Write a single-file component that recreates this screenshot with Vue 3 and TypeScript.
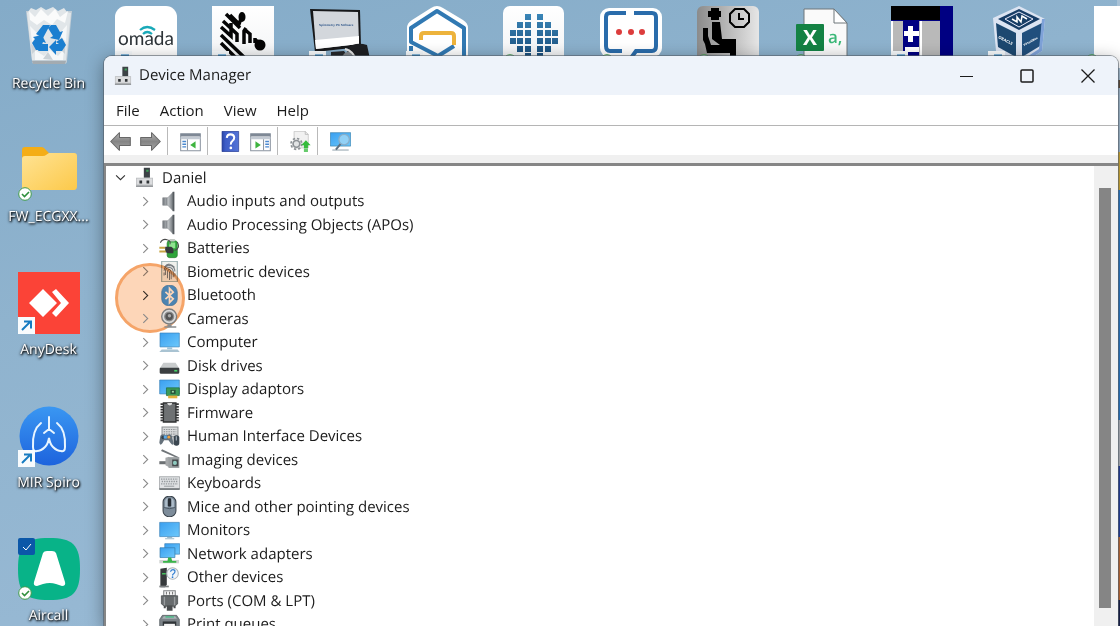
<script setup lang="ts">
import { ref } from 'vue'

type Badge = 'link' | 'sync' | ''

interface Shortcut {
  id: string
  name: string
  badge: Badge
  checked?: boolean
}

interface DeviceClass {
  icon: string
  name: string
}

const topShortcuts: Shortcut[] = [
  { id: 'bin', name: 'Recycle Bin', badge: '' },
  { id: 'omada', name: '', badge: 'link' },
  { id: 'zebra', name: '', badge: 'link' },
  { id: 'spiropc', name: '', badge: 'link' },
  { id: 'hexagon', name: '', badge: 'link' },
  { id: 'squares', name: '', badge: 'sync' },
  { id: 'chat', name: '', badge: 'sync' },
  { id: 'waiting', name: '', badge: 'sync' },
  { id: 'csv', name: '', badge: 'sync' },
  { id: 'cross', name: '', badge: 'link' },
  { id: 'vbox', name: '', badge: 'link' },
  { id: 'blank', name: '', badge: 'sync' },
]

const sideShortcuts: Shortcut[] = [
  { id: 'folder', name: 'FW_ECGXX...', badge: 'sync' },
  { id: 'anydesk', name: 'AnyDesk', badge: 'link' },
  { id: 'spiro', name: 'MIR Spiro', badge: 'link' },
  { id: 'aircall', name: 'Aircall', badge: 'sync', checked: true },
]

const menus: string[] = ['File', 'Action', 'View', 'Help']

const toolGroups: { id: string; label: string }[][] = [
  [{ id: 't-back', label: 'Back' }, { id: 't-forward', label: 'Forward' }],
  [{ id: 't-tree', label: 'Show/Hide Console Tree' }],
  [{ id: 't-help', label: 'Help' }, { id: 't-action', label: 'Show/Hide Action Pane' }],
  [{ id: 't-update', label: 'Update device drivers' }],
  [{ id: 't-scan', label: 'Scan for hardware changes' }],
]

const devices: DeviceClass[] = [
  { icon: 'd-audio', name: 'Audio inputs and outputs' },
  { icon: 'd-audio', name: 'Audio Processing Objects (APOs)' },
  { icon: 'd-battery', name: 'Batteries' },
  { icon: 'd-finger', name: 'Biometric devices' },
  { icon: 'd-bluetooth', name: 'Bluetooth' },
  { icon: 'd-camera', name: 'Cameras' },
  { icon: 'd-computer', name: 'Computer' },
  { icon: 'd-disk', name: 'Disk drives' },
  { icon: 'd-display', name: 'Display adaptors' },
  { icon: 'd-firmware', name: 'Firmware' },
  { icon: 'd-hid', name: 'Human Interface Devices' },
  { icon: 'd-imaging', name: 'Imaging devices' },
  { icon: 'd-keyboard', name: 'Keyboards' },
  { icon: 'd-mouse', name: 'Mice and other pointing devices' },
  { icon: 'd-monitor', name: 'Monitors' },
  { icon: 'd-network', name: 'Network adapters' },
  { icon: 'd-other', name: 'Other devices' },
  { icon: 'd-port', name: 'Ports (COM & LPT)' },
  { icon: 'd-printer', name: 'Print queues' },
]

const highlighted = ref('Bluetooth')
const expanded = ref(true)
</script>

<template>
  <div class="desktop">
    <svg class="sprite" aria-hidden="true">
      <defs>
        <linearGradient id="gSky" x1="0" y1="0" x2="1" y2="1">
          <stop offset="0" stop-color="#3a9ff0" /><stop offset="1" stop-color="#6cc8fb" />
        </linearGradient>
        <linearGradient id="gSteel" x1="0" y1="0" x2="1" y2="0">
          <stop offset="0" stop-color="#6d7277" /><stop offset="0.5" stop-color="#c3c7ca" /><stop offset="1" stop-color="#6d7277" />
        </linearGradient>
        <linearGradient id="gArrow" x1="0" y1="0" x2="0" y2="1">
          <stop offset="0" stop-color="#b4b4b4" /><stop offset="0.5" stop-color="#858585" /><stop offset="1" stop-color="#a6a6a6" />
        </linearGradient>
        <linearGradient id="gFolder" x1="0" y1="0" x2="1" y2="1">
          <stop offset="0" stop-color="#ffe394" /><stop offset="1" stop-color="#fcc94a" />
        </linearGradient>
        <linearGradient id="gSpiro" x1="0" y1="0" x2="0" y2="1">
          <stop offset="0" stop-color="#3a97f2" /><stop offset="1" stop-color="#1d63dd" />
        </linearGradient>
        <linearGradient id="gTile" x1="0" y1="0" x2="0" y2="1">
          <stop offset="0" stop-color="#ffffff" /><stop offset="1" stop-color="#f0f2f4" />
        </linearGradient>
        <linearGradient id="gSeat" x1="0" y1="0" x2="1" y2="0">
          <stop offset="0" stop-color="#8b8b8b" /><stop offset="1" stop-color="#e6e6e6" />
        </linearGradient>
        <linearGradient id="gHelp" x1="0" y1="0" x2="1" y2="0">
          <stop offset="0" stop-color="#2a45a8" /><stop offset="0.2" stop-color="#3d5cc6" /><stop offset="1" stop-color="#5474d6" />
        </linearGradient>
        <linearGradient id="gSquares" x1="0" y1="0" x2="0" y2="1">
          <stop offset="0" stop-color="#3a86b8" /><stop offset="1" stop-color="#174a78" />
        </linearGradient>
      </defs>

      <!-- desktop shortcuts -->
      <symbol id="bin" viewBox="0 0 62 62">
        <path d="M8 5h46l-5 50q0 3-3 3H17q-3 0-3-3z" fill="#c3ced6" />
        <path d="M9 7l4-5 5 2 5-3 5 3 7-3 5 4 6-3 3 4 4 1-5 47H14z" fill="#e1e6e9" />
        <path d="M11 5l6 6 6-8 7 7 7-7 5 8 8-6-3 12-8-4-5 6-8-5-7 5-7-5z" fill="#fafbfb" />
        <path d="M12 20l8 8-6 8zM49 19l-8 9 7 8zM17 44l9 6 6-6 8 6 6-7-1 11H17z" fill="#f6f8f9" />
        <path d="M13 38l6 5-5 5zM30 46l5 8-10-1zM47 38l-5 5 5 5z" fill="#cbd2d7" />
        <path d="M14 55h34l-1 3H15z" fill="#a3abb1" />
        <g fill="#1b7fd0">
          <path d="M25 19h7l-7 13-7-4zM33 19h5l4 7 3-1-4 9-9-2 3-2-5-8z" />
          <path d="M15 31l9-2 4 8-3-1-3 8h-4l-4-7 3-4z" />
          <path d="M20 45l4-7h6v7z" />
          <path d="M38 36l6-4 4 7-4 6h-6v4l-7-8 7-7v4h3z" />
        </g>
      </symbol>
      <symbol id="omada" viewBox="0 0 62 62">
        <rect width="62" height="62" rx="11" fill="#fff" />
        <path d="M25 24q7-6 15 0M28 28q4-4 9 0" fill="none" stroke="#19a9b8" stroke-width="2.200" />
        <text x="31" y="39" text-anchor="middle" font-family="Lato, sans-serif" font-size="19" fill="#2d3338">omada</text>
      </symbol>
      <symbol id="zebra" viewBox="0 0 62 62">
        <rect width="62" height="62" fill="url(#gTile)" />
        <g fill="none" stroke="#050505" stroke-width="3.500">
          <path d="M9 29l26 25M9 21l10 9V17M11 15l14 13v8M14 8l14 14M9 37l20 20M18 9l9 9 3-8M32 38V25l2-3M32 23l6 5v9M43 32v5" />
        </g>
        <ellipse cx="30" cy="11" rx="3.500" ry="5" fill="#050505" /><circle cx="48" cy="39" r="5.500" fill="#050505" /><path d="M42 32l8 3-4 4z" fill="#050505" />
      </symbol>
      <symbol id="spiropc" viewBox="0 0 62 62">
        <path d="M1 3l50 1 1 37-46 5z" fill="#17181a" />
        <path d="M4 5l45 1 1 32-43 5z" fill="#d3d7dc" />
        <path d="M6 34l44-4v8L7 43z" fill="#fff" />
        <path d="M22 46l13-1 5 7H22z" fill="#26282b" />
        <text x="10" y="20" font-family="Liberation Sans, sans-serif" font-size="3" font-weight="bold" fill="#2c5488">Spirometry PC Software</text>
        <path d="M38 43q8-8 20-4l3 14-20 9z" fill="#1e1f22" />
        <path d="M32 53q4-10 12-6l6 10H32z" fill="#85898d" /><path d="M36 43q9 2 11 12" fill="none" stroke="#e4e4e4" stroke-width="2" />
      </symbol>
      <symbol id="hexagon" viewBox="0 0 62 62">
        <path d="M31 0q3 0 6 2l20 12q5 3 5 8v40H8L1 48V22q0-5 5-8L25 2q3-2 6-2z" fill="#fff" />
        <path d="M58 62V22L31 5 5 22v14l27 14 16-10" fill="none" stroke="#3179b3" stroke-width="4" stroke-linejoin="round" />
        <path d="M15 34v-4q0-3 3-3h27q3 0 3 3v9" fill="none" stroke="#edb33c" stroke-width="4" />
        <path d="M5 40v5" stroke="#3179b3" stroke-width="4" />
      </symbol>
      <symbol id="squares" viewBox="0 0 62 62">
        <rect width="61" height="62" rx="7" fill="url(#gTile)" />
        <path d="M22 8h6v6h-6zM34 8h6v6h-6zM14 16h6v6h-6zM22 16h6v6h-6zM34 16h6v6h-6zM42 16h6v6h-6zM7 24h6v6H7zM14 24h6v6h-6zM22 24h6v6h-6zM34 24h6v6h-6zM42 24h6v6h-6zM49 24h6v6h-6zM7 32h6v6H7zM14 32h6v6h-6zM22 32h6v6h-6zM34 32h6v6h-6zM42 32h6v6h-6zM49 32h6v6h-6zM14 40h6v6h-6zM22 40h6v6h-6zM34 40h6v6h-6zM42 40h6v6h-6zM22 47h6v6h-6zM34 47h6v6h-6z" fill="url(#gSquares)" />
      </symbol>
      <symbol id="chat" viewBox="0 0 62 62">
        <rect y="2" width="62" height="49" rx="9" fill="#fff" />
        <path d="M26 7H10q-4 0-4 4v29q0 5 4 5h12M34 7h18q4 0 4 4v29q0 5-4 5H36l-5 7" fill="none" stroke="#2a6cab" stroke-width="4" />
        <g fill="#dc3d3d"><circle cx="19" cy="26" r="3" /><circle cx="31" cy="26" r="3" /><circle cx="42" cy="26" r="3" /></g>
      </symbol>
      <symbol id="waiting" viewBox="0 0 62 62">
        <rect width="62" height="62" rx="6" fill="url(#gSeat)" />
        <path d="M14 2h8v3h2v6h-2v3h-8v-3h-3V5h3zM15 16h8l2 17h14v25h-6V47H10l-2-9-2-4V22h5v8l3 9h9l-8-6z" />
        <path d="M38 3h9l5 5v8l-5 5h-9l-5-5V8zM42 7v6h5" fill="none" stroke="#000" stroke-width="2" />
      </symbol>
      <symbol id="csv" viewBox="0 0 62 62">
        <path d="M10 3h30l13 14v45H10z" fill="#fafafa" stroke="#6f777b" />
        <path d="M40 3v14h13z" fill="#fff" stroke="#6f777b" />
        <rect x="2" y="18" width="28" height="27" rx="1" fill="#148244" />
        <text x="16" y="39" text-anchor="middle" font-family="Open Sans, sans-serif" font-size="21" font-weight="bold" fill="#fff">X</text>
        <text x="34" y="37" font-family="Open Sans, sans-serif" font-size="17" font-weight="600" fill="#3cb878">a,</text>
      </symbol>
      <symbol id="cross" viewBox="0 0 62 62">
        <path d="M0 0h62v62H0z" fill="#000082" /><path d="M0 0h49v14H0z" />
        <path d="M0 15h49v47H0z" fill="#b9b9b9" /><path d="M0 15h2v47H0zM29 15h2v47h-2z" fill="#fff" />
        <path d="M12 14h16v48H12z" fill="#000082" />
        <path d="M17 20h5v5h6v5h-6v6h-5v-6h-4v-5h4zM14 41h14v5H14z" fill="#fff" />
      </symbol>
      <symbol id="vbox" viewBox="0 0 62 62">
        <path d="M31 0l26 13-3 32-23 15L8 45 5 12z" fill="#dce4f2" />
        <path d="M31 3l21 10-21 11L10 13z" fill="#173d66" /><path d="M31 6l14 7-14 8-14-8z" fill="none" stroke="#eef" />
        <path d="M24 13l5 3 0-5 4 5 1-6 5 3" fill="none" stroke="#fff" stroke-width="1.500" />
        <path d="M8 17l20 10v24L10 41z" fill="#1d4870" /><path d="M34 27l20-10-2 23-18 11z" fill="#214f7d" />
        <path d="M57 13l-3 32-23 15v-4l20-13 3-30z" fill="#7ea2d8" />
        <text font-family="Open Sans, sans-serif" font-size="4" font-weight="bold" fill="#fff" transform="translate(10 32) rotate(27)">ORACLE</text>
        <text font-family="Open Sans, sans-serif" font-size="3" font-weight="bold" fill="#fff" transform="translate(36 40) rotate(-28)">VirtualBox</text>
      </symbol>
      <symbol id="blank" viewBox="0 0 62 62"><path d="M9 0h46v62H9z" fill="#fff" /></symbol>
      <symbol id="folder" viewBox="0 0 62 62">
        <path d="M4 11q0-3 3-3h16q2 0 3 1l5 5h24q3 0 3 3v20H4z" fill="#f4ad16" />
        <path d="M4 20q0-3 3-3h18q2 0 3-1l3-2h25q3 0 3 3v30q0 4-3 4H7q-3 0-3-3z" fill="url(#gFolder)" />
      </symbol>
      <symbol id="anydesk" viewBox="0 0 62 62">
        <path d="M0 0h62v62H0z" fill="#fb4337" />
        <path d="M25 17l14 14-14 14-14-14zM34 20l4-3 13 14-13 14-4-4 9-10z" fill="#fff" />
      </symbol>
      <symbol id="spiro" viewBox="0 0 62 62">
        <circle cx="31" cy="31" r="29.500" fill="url(#gSpiro)" />
        <path d="M31 12v12l-5 4M31 24l5 4M23 18q-9 7-8 24 0 5 4 4 4 0 8-4 3-3 4-9 1 6 4 9 4 4 8 4 4 1 4-4 1-17-8-24" fill="none" stroke="#e8f5ff" stroke-width="2" stroke-linecap="round" />
      </symbol>
      <symbol id="aircall" viewBox="0 0 62 62">
        <path d="M31 0C55 0 62 7 62 31S55 62 31 62 0 55 0 31 7 0 31 0z" fill="#08b388" />
        <path d="M25 15q1-2 4-2h5q3 0 4 2l9 29q1 4-3 4l-6-2q-6-2-13 0l-6 2q-4 0-3-4z" fill="#fff" />
      </symbol>
      <symbol id="link" viewBox="0 0 62 62">
        <path d="M0 45h17v17H0z" fill="#f8fbfd" />
        <path d="M4 58l8-8M6 49.500h7v7" fill="none" stroke="#167bc1" stroke-width="2" />
      </symbol>
      <symbol id="sync" viewBox="0 0 62 62">
        <circle cx="7" cy="55" r="6.300" fill="#fff" stroke="#3f9b4b" />
        <path d="M4 55l2.500 2.500 4.500-4.500" fill="none" stroke="#2f8f3c" stroke-width="1.600" />
      </symbol>
      <symbol id="ticked" viewBox="0 0 62 62">
        <rect width="17" height="17" rx="2" fill="#0b57a8" />
        <path d="M5 9l3 3 5-6" fill="none" stroke="#fff" />
      </symbol>

      <!-- window and toolbar -->
      <symbol id="manager" viewBox="0 0 54 62">
        <path d="M25 2h18v30H25z" fill="#3c4246" /><path d="M32 8h7v6h-7z" fill="#3fa05a" />
        <path d="M2 32h50v26H2z" fill="#b9bbbd" /><path d="M4 34h46v18H4z" fill="#dcdddf" />
        <path d="M12 40h8v9h-8zM33 40h8v9h-8z" fill="#2f3336" /><path d="M2 55h50v3H2z" fill="#85898c" />
      </symbol>
      <symbol id="t-back" viewBox="0 0 62 62">
        <path d="M2 31L28 5v14h32v24H28v14z" fill="url(#gArrow)" stroke="#686868" stroke-width="3" stroke-linejoin="round" />
      </symbol>
      <symbol id="t-forward" viewBox="0 0 62 62">
        <path d="M60 31L34 5v14H2v24h32v14z" fill="url(#gArrow)" stroke="#686868" stroke-width="3" stroke-linejoin="round" />
      </symbol>
      <symbol id="t-tree" viewBox="0 0 62 62">
        <path d="M2 8h58v50H2z" fill="#fff" stroke="#8b94a0" stroke-width="3" />
        <path d="M2 8h58v8H2z" fill="#7e8895" /><path d="M2 18h58v6H2z" fill="#c3cad3" /><path d="M22 24v33" stroke="#8b94a0" stroke-width="3" />
        <path d="M7 31h11M7 39h11M7 47h11" stroke="#4a88cf" stroke-width="4" /><path d="M46 30v22L30 41z" fill="#3fb43f" />
      </symbol>
      <symbol id="t-help" viewBox="0 0 62 62">
        <path d="M6 1h49v60H6z" fill="url(#gHelp)" stroke="#24398f" stroke-width="2" />
        <path d="M20 20q1-10 11-10t11 9q0 6-5 10-6 4-5 11" fill="none" stroke="#fff" stroke-width="6" /><circle cx="32" cy="50" r="4" fill="#fff" />
      </symbol>
      <symbol id="t-action" viewBox="0 0 62 62">
        <path d="M2 8h58v50H2z" fill="#fff" stroke="#8b94a0" stroke-width="3" />
        <path d="M2 8h58v8H2z" fill="#7e8895" /><path d="M2 18h58v6H2z" fill="#c3cad3" /><path d="M40 24v33" stroke="#8b94a0" stroke-width="3" />
        <path d="M45 31h11M45 39h11M45 47h11" stroke="#4a88cf" stroke-width="4" /><path d="M16 30v22l16-11z" fill="#3fb43f" />
      </symbol>
      <symbol id="t-update" viewBox="0 0 62 62">
        <path d="M12 1h33l9 9v40H12z" fill="#f1f1f1" stroke="#bcbcbc" stroke-width="2" /><path d="M45 1v9h9" fill="none" stroke="#aaa" stroke-width="2" />
        <circle cx="19" cy="38" r="16" fill="none" stroke="#8d9296" stroke-width="5" stroke-dasharray="7 5.500" />
        <circle cx="19" cy="38" r="10" fill="#e2e4e5" stroke="#8d9296" stroke-width="5" />
        <path d="M47 27l14 15h-8v8H41v-8h-8zM41 52h12v3H41zM41 57h12v4H41z" fill="#35bb3c" />
      </symbol>
      <symbol id="t-scan" viewBox="0 0 64 62">
        <path d="M1 4h62v41H1z" fill="url(#gSky)" stroke="#357da8" stroke-width="2" />
        <path d="M7 57h50" stroke="#8fa0ab" stroke-width="3" />
        <path d="M34 36L18 56" stroke="#5d7080" stroke-width="6" /><circle cx="43" cy="25" r="16" fill="#9bd5f6" fill-opacity=".85" stroke="#86aeca" stroke-width="4" />
      </symbol>

      <!-- device classes -->
      <symbol id="d-audio" viewBox="0 0 62 62">
        <path d="M11 20h15L42 3v56L26 42H11z" fill="url(#gSteel)" stroke="#8b8f93" stroke-width="2" /><path d="M23 21v20" stroke="#6c7176" stroke-width="2" /><path d="M43 2v58" stroke="#565b60" stroke-width="5" />
      </symbol>
      <symbol id="d-battery" viewBox="0 0 62 62">
        <rect x="24" y="8" width="30" height="50" rx="7" fill="#2fa53b" stroke="#277a2e" stroke-width="2" /><path d="M30 13h18v17H30z" fill="#8fe38f" />
        <rect x="30" y="3" width="18" height="7" rx="3" fill="#c3c8c3" />
        <path d="M4 14Q10 1 24 5q12 2 8 14M54 12q10 18-8 25" fill="none" stroke="#4b4b4b" stroke-width="3" />
        <path d="M18 26h18q10 5 6 19H27l-9-4z" fill="#363a3c" /><path d="M1 29h17M1 40h19" stroke="#c6a544" stroke-width="6" />
      </symbol>
      <symbol id="d-finger" viewBox="0 0 62 62">
        <path d="M8 1h46v60H8z" fill="#f0f1ed" stroke="#8fa6a8" stroke-width="3" />
        <path d="M16 18q14-18 30 1M15 29q1-15 15-16 16 0 17 18M19 41V30q1-11 11-11t12 12v17M25 51V31q1-6 5-6t6 7v22M31 31v25M47 36v10M15 34v9" fill="none" stroke="#767b80" stroke-width="3" />
      </symbol>
      <symbol id="d-bluetooth" viewBox="0 0 62 62">
        <rect x="8" y="1" width="46" height="60" rx="20" fill="#4c9df5" stroke="#4686c9" stroke-width="2" />
        <path d="M19 20l23 21-11 11V10l11 11-23 21" fill="none" stroke="#fff" stroke-width="5" />
      </symbol>
      <symbol id="d-camera" viewBox="0 0 62 62">
        <circle cx="30" cy="25" r="22" fill="#d9d9d9" stroke="#7d7d7d" stroke-width="4" /><circle cx="30" cy="25" r="13" fill="#555" stroke="#8c8c8c" stroke-width="4" /><circle cx="31" cy="23" r="5" fill="#aaa" />
        <path d="M25 48h12v6h14v4H16v-4h9z" fill="#8a8d8f" />
      </symbol>
      <symbol id="d-computer" viewBox="0 0 62 62">
        <path d="M3 3h57v41H3z" fill="url(#gSky)" stroke="#3b83b8" stroke-width="2" /><path d="M24 45h15v6H24z" fill="#9cc3da" /><path d="M8 52h47l6 7H1z" fill="#a9c3d2" />
      </symbol>
      <symbol id="d-disk" viewBox="0 0 62 62">
        <path d="M13 23h36l11 17H2z" fill="#c9cccd" /><rect x="2" y="38" width="58" height="17" rx="3" fill="#3b3f41" /><path d="M45 44h9v5h-9z" fill="#45d067" />
      </symbol>
      <symbol id="d-display" viewBox="0 0 62 62">
        <path d="M2 3h58v41H2z" fill="url(#gSky)" stroke="#3b83b8" stroke-width="2" /><path d="M22 26h38v23H22z" fill="#3a9a58" stroke="#1a6636" stroke-width="2" />
        <path d="M27 49h27v8H27z" fill="#e3b23c" /><path d="M34 32h15v12H34z" fill="#275139" /><path d="M38 35h6v5h-6z" fill="#9dd5a6" />
      </symbol>
      <symbol id="d-firmware" viewBox="0 0 62 62">
        <path d="M13 3h37v56H13z" fill="#6e7173" stroke="#2f3132" stroke-width="4" />
        <path d="M9 4v56M54 4v56" stroke="#38393a" stroke-width="9" stroke-dasharray="5 3" /><path d="M24 3h15q0 7-7 7t-8-7z" fill="#ddd" />
      </symbol>
      <symbol id="d-hid" viewBox="0 0 62 62">
        <path d="M9 3h47v29H9z" fill="#d8dadb" stroke="#8b8f92" stroke-width="3" /><path d="M14 10h37M14 17h37M14 24h37" stroke="#8b8f92" stroke-width="3" stroke-dasharray="4 3" />
        <path d="M4 29q5-8 13-3 6 2 12-1 7-3 10 7l4 21q-3 6-9-3l-6-8H15l-5 9q-7 9-9-2z" fill="#65717b" /><circle cx="12" cy="34" r="5" fill="#36414a" /><path d="M14 28h9v9h-9z" fill="#58a9e8" /><circle cx="29" cy="33" r="4" fill="#f1a13c" />
        <rect x="43" y="27" width="17" height="31" rx="8" fill="#3b4751" /><path d="M51 30v13" stroke="#b4c1cb" stroke-width="3" />
      </symbol>
      <symbol id="d-imaging" viewBox="0 0 62 62">
        <path d="M9 1l50 23-2 4L6 6z" fill="#707579" /><path d="M1 36h20v9H1z" fill="#6c7073" /><path d="M19 26l11-3v31l-11-6z" fill="#a6a9ab" /><path d="M28 24h32v32H28z" fill="#9ba0a2" /><path d="M39 31h18v20H39z" fill="#44494c" /><circle cx="47" cy="41" r="6" fill="#8ecabf" />
      </symbol>
      <symbol id="d-keyboard" viewBox="0 0 62 62">
        <path d="M1 11h60v36H1z" fill="#dfe1e3" stroke="#8a8e92" stroke-width="2" /><path d="M6 18h50M8 25h48M6 32h50" stroke="#92979b" stroke-width="4" stroke-dasharray="4 3" /><path d="M15 39h30" stroke="#9a9ea2" stroke-width="3" /><path d="M1 45h60v5H1z" fill="#73787c" />
      </symbol>
      <symbol id="d-mouse" viewBox="0 0 62 62">
        <rect x="12" y="1" width="38" height="60" rx="17" fill="#7d8c9a" stroke="#374049" stroke-width="3" /><path d="M18 19q0-12 8-12v26h-8zM36 7q8 1 8 13v13h-8z" fill="#aebdca" /><rect x="26" y="7" width="10" height="24" rx="4" fill="#292f36" /><path d="M15 34q16 7 32 0" fill="none" stroke="#36404a" stroke-width="2" />
      </symbol>
      <symbol id="d-monitor" viewBox="0 0 62 62">
        <path d="M2 7h58v42H2z" fill="url(#gSky)" stroke="#3b83b8" stroke-width="2" /><path d="M24 50h15v3H24zM18 54h27v3H18z" fill="#9cb9c9" />
      </symbol>
      <symbol id="d-network" viewBox="0 0 62 62">
        <path d="M17 2h44v31H17z" fill="url(#gSky)" stroke="#3b83b8" stroke-width="2" /><path d="M3 14h44v29H3z" fill="url(#gSky)" stroke="#3479aa" stroke-width="2" />
        <path d="M1 50h58v10H1z" fill="#d0d3d2" /><path d="M27 43h9l3 10h12v5H12v-5h13z" fill="#39b54a" />
      </symbol>
      <symbol id="d-other" viewBox="0 0 62 62">
        <path d="M4 5l19-3v50l-5 8H4z" fill="#363a3c" /><path d="M9 18h11v4H9z" fill="#4ad164" /><path d="M1 55h28v5H1z" fill="#7c8082" /><circle cx="40" cy="19" r="17" fill="#f2f6fa" stroke="#a9b1b7" stroke-width="3" />
        <path d="M34 14q1-6 7-6 7 0 6 6 0 3-4 6-3 2-3 5" fill="none" stroke="#2d7bd0" stroke-width="3.500" /><circle cx="40" cy="30" r="2.500" fill="#2d7bd0" />
      </symbol>
      <symbol id="d-port" viewBox="0 0 62 62">
        <path d="M14 2h34v15H14z" fill="#f2f2f2" stroke="#7d8082" stroke-width="3" /><path d="M22 5v8M31 5v8M40 5v8" stroke="#777" stroke-width="3" />
        <path d="M7 17h48v24l-9 7H16l-9-7z" fill="#676b6d" stroke="#3f4244" stroke-width="2" /><path d="M16 20v25M46 20v25" stroke="#999d9f" stroke-width="4" /><path d="M23 46h17v15H23zM14 47h6v7h-6zM43 47h6v7h-6z" fill="#4a4d4f" />
      </symbol>
      <symbol id="d-printer" viewBox="0 0 62 62">
        <path d="M10 4h42l8 12v34H2V16z" fill="#7c8388" stroke="#4f565a" stroke-width="2" /><path d="M14 7h34l5 7H9z" fill="#a9b3b7" /><path d="M19 6h25v5H19z" fill="#58b78c" /><path d="M11 22h40v12H11z" fill="#2f3437" /><path d="M15 29h32v20H15z" fill="#f4f4f4" />
      </symbol>
    </svg>

    <main class="icons">
      <a v-for="item in topShortcuts" :key="item.id" class="shortcut" href="#" :aria-label="item.name || item.id">
        <span class="tile">
          <svg class="art"><use :href="'#' + item.id" /></svg>
          <svg v-if="item.badge" class="overlay"><use :href="'#' + item.badge" /></svg>
        </span>
        <span class="caption">{{ item.name }}</span>
      </a>
      <a v-for="item in sideShortcuts" :key="item.id" class="shortcut side" href="#">
        <span class="tile">
          <svg class="art"><use :href="'#' + item.id" /></svg>
          <svg v-if="item.badge" class="overlay"><use :href="'#' + item.badge" /></svg>
          <svg v-if="item.checked" class="overlay"><use href="#ticked" /></svg>
        </span>
        <span class="caption">{{ item.name }}</span>
      </a>
    </main>

    <section class="window" aria-label="Device Manager">
      <header class="titlebar">
        <svg class="app-icon"><use href="#manager" /></svg>
        <h1>Device Manager</h1>
        <button class="control" type="button" aria-label="Minimise">
          <svg viewBox="0 0 14 14"><path d="M1 7.500h13" /></svg>
        </button>
        <button class="control" type="button" aria-label="Maximise">
          <svg viewBox="0 0 14 14"><rect x="1" y="1" width="12" height="12" rx="1" stroke-width="1.500" /></svg>
        </button>
        <button class="control" type="button" aria-label="Close">
          <svg viewBox="0 0 14 14"><path d="M.5.5l13 13M13.500.5l-13 13" stroke-width="1.300" /></svg>
        </button>
      </header>

      <nav class="menubar">
        <button v-for="menu in menus" :key="menu" type="button">{{ menu }}</button>
      </nav>

      <div class="toolbar" role="toolbar">
        <div v-for="(group, index) in toolGroups" :key="index" class="group">
          <button v-for="tool in group" :key="tool.id" type="button" :aria-label="tool.label">
            <svg><use :href="'#' + tool.id" /></svg>
          </button>
        </div>
      </div>

      <div class="pane">
        <div class="tree">
          <div class="row root">
            <button class="toggle" type="button" aria-label="Daniel" :aria-expanded="expanded" @click="expanded = !expanded">
              <svg viewBox="0 0 10 10"><path d="M1 3l4 4 4-4" /></svg>
            </button>
            <svg class="device"><use href="#manager" /></svg>
            <span>Daniel</span>
          </div>
          <ul v-if="expanded">
            <li v-for="device in devices" :key="device.name" class="row" :class="{ active: device.name === highlighted }">
              <button class="toggle" type="button" :aria-label="device.name">
                <svg viewBox="0 0 10 10"><path d="M3 1l4 4-4 4" /></svg>
              </button>
              <svg class="device"><use :href="'#' + device.icon" /></svg>
              <span>{{ device.name }}</span>
              <i v-if="device.name === highlighted" class="pointer"></i>
            </li>
          </ul>
        </div>
        <div class="scrollbar"><div class="thumb"></div></div>
      </div>
    </section>
  </div>
</template>

<style>
html,
body {
  margin: 0;
  overflow: hidden;
}
</style>

<style scoped>
.desktop {
  position: relative;
  height: 100vh;
  overflow: hidden;
  font-family: "Open Sans", "Noto Sans", sans-serif;
  font-size: 15px;
  color: #1b1b1b;
  text-rendering: geometricPrecision;
  background:
    linear-gradient(#a9c2d6 0 80px, #66513f 80px 88px, #a9c2d6 88px 152px, #d9b23c 152px 190px, #2f7fd0 190px 420px, #b8bcc4 420px 466px, #2743a4 466px 537px, #c8713c 537px 600px, #1c2450 600px) right top / 3px 100% no-repeat,
    linear-gradient(165deg, #84abc8 0%, #8fb3ce 35%, #9dbdd8 100%);
}

.sprite {
  position: absolute;
  width: 0;
  height: 0;
}

.icons {
  display: grid;
  grid-template-columns: repeat(12, 97px);
  grid-auto-rows: 133px;
}

.shortcut {
  display: flex;
  flex-direction: column;
  align-items: center;
  gap: 6px;
  padding-top: 6px;
  color: #fff;
  text-decoration: none;
}

.side {
  grid-column: 1;
}

.tile {
  position: relative;
  display: block;
  width: 62px;
  height: 62px;
}

.tile svg {
  display: block;
  width: 62px;
  height: 62px;
}

.tile .overlay {
  position: absolute;
  inset: 0;
}

.caption {
  font-size: 14px;
  line-height: 20px;
  white-space: nowrap;
  text-shadow: 1px 1px 2px #000, 0 1px 3px #000;
}

.window {
  position: absolute;
  inset: 56px 2px 0 104px;
  display: flex;
  flex-direction: column;
  overflow: hidden;
  border-radius: 8px 8px 0 0;
  background: #f0f0f0;
  box-shadow: 0 0 0 1px rgba(85, 95, 105, 0.6), 0 4px 18px rgba(0, 0, 0, 0.4);
}

button {
  display: flex;
  align-items: center;
  justify-content: center;
  padding: 0;
  border: 0;
  background: none;
  font: inherit;
  color: inherit;
}

.titlebar {
  display: flex;
  align-items: center;
  flex: none;
  height: 39px;
  padding-left: 10px;
  background: #eef3fa;
}

.app-icon {
  width: 18px;
  height: 20px;
}

h1 {
  flex: 1;
  margin: 0 0 0 7px;
  font-size: 15px;
  line-height: 20px;
  padding-bottom: 2px;
  font-weight: 400;
}

.control {
  width: 61px;
  height: 39px;
}

.control svg {
  width: 14px;
  height: 14px;
  fill: none;
  stroke: #1b1b1b;
}

.menubar {
  display: flex;
  align-items: center;
  flex: none;
  gap: 20px;
  height: 29px;
  padding: 0 12px 1px;
  border-bottom: 1px solid #b5b5b5;
  background: #fff;
}

.toolbar {
  display: flex;
  flex: none;
  height: 28px;
  padding: 1px 1px 0;
  background: #fff;
}

.group {
  display: flex;
}

.group + .group {
  margin-left: 2px;
  padding-left: 7px;
  border-left: 1px solid #b9b9b9;
}

.group button {
  width: 30px;
}

.group svg {
  width: 21px;
  height: 21px;
}

.pane {
  display: flex;
  flex: 1;
  min-height: 0;
  margin-top: 8px;
  border-top: 3px solid #868686;
  border-left: 2px solid #868686;
}

.tree {
  flex: 1;
  min-width: 0;
  overflow: hidden;
  background: #fff;
}

ul {
  margin: 0;
  padding: 0 0 0 25px;
  list-style: none;
}

.row {
  position: relative;
  display: flex;
  align-items: center;
  height: 23px;
  padding-left: 4px;
  white-space: nowrap;
}

li:nth-child(odd) {
  height: 24px;
}

.toggle {
  flex: none;
  width: 20px;
  height: 20px;
}

.toggle svg {
  width: 11px;
  height: 11px;
  fill: none;
  stroke: #8a8a8a;
}

.root .toggle svg,
.active .toggle svg {
  stroke: #333;
}

.device {
  flex: none;
  width: 21px;
  height: 21px;
  margin: 0 7px 0 4px;
}

.pointer {
  position: absolute;
  top: 50%;
  left: 14px;
  width: 64px;
  height: 64px;
  border: 3px solid #f5a468;
  border-radius: 50%;
  background: #fdd6b8;
  mix-blend-mode: multiply;
  transform: translate(-30px, -32px);
  pointer-events: none;
}

.scrollbar {
  display: flex;
  justify-content: center;
  flex: none;
  width: 24px;
  background: #f0f0f0;
}

.thumb {
  width: 12px;
  margin: 22px 2px 18px 0;
  background: #858585;
}
</style>
